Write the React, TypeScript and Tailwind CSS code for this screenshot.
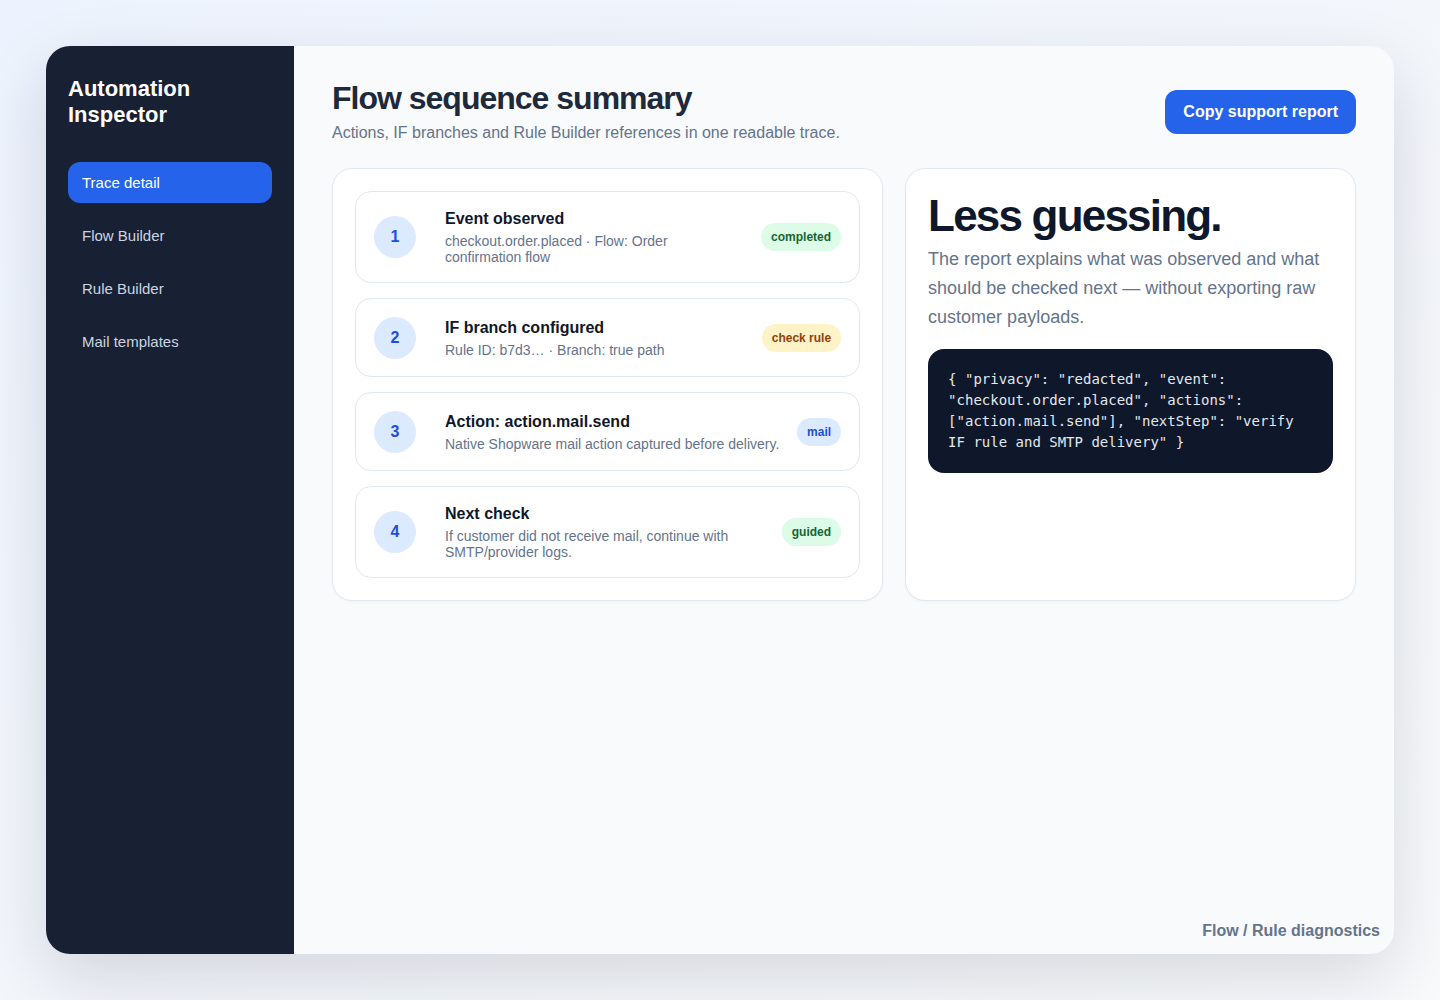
const steps = [
  {
    n: 1,
    title: 'Event observed',
    desc: 'checkout.order.placed · Flow: Order confirmation flow',
    badge: 'completed',
    tone: 'bg-[#dcfce7] text-[#166534]',
  },
  {
    n: 2,
    title: 'IF branch configured',
    desc: 'Rule ID: b7d3… · Branch: true path',
    badge: 'check rule',
    tone: 'bg-[#fef3c7] text-[#92400e]',
  },
  {
    n: 3,
    title: 'Action: action.mail.send',
    desc: 'Native Shopware mail action captured before delivery.',
    badge: 'mail',
    tone: 'bg-[#dbeafe] text-[#1d4ed8]',
  },
  {
    n: 4,
    title: 'Next check',
    desc: 'If customer did not receive mail, continue with SMTP/provider logs.',
    badge: 'guided',
    tone: 'bg-[#dcfce7] text-[#166534]',
  },
];

const nav = ['Trace detail', 'Flow Builder', 'Rule Builder', 'Mail templates'];

export default function App() {
  return (
    <div className="min-h-[1000px] w-full bg-gradient-to-br from-[#edf3fe] via-[#f3f6fb] to-[#f9fafb] p-[46px] font-['Liberation_Sans',Arial,sans-serif]">
      <div className="flex h-[908px] overflow-hidden rounded-[24px] bg-[#f8fafc] shadow-[0_24px_70px_rgba(15,23,42,0.14)]">
        {/* Sidebar */}
        <aside className="w-[248px] shrink-0 bg-[#182033] px-[22px] pt-[30px]">
          <h1 className="text-[22px] font-bold leading-[26px] text-white">
            Automation
            <br />
            Inspector
          </h1>
          <nav className="mt-[34px] flex flex-col gap-3">
            {nav.map((item, idx) => (
              <div
                key={item}
                className={
                  idx === 0
                    ? 'flex h-[41px] items-center rounded-xl bg-[#2563eb] px-[14px] pt-px text-[15px] text-white'
                    : 'flex h-[41px] items-center rounded-xl px-[14px] pt-px text-[15px] text-[#cbd5e1]'
                }
              >
                {item}
              </div>
            ))}
          </nav>
        </aside>

        {/* Main */}
        <main className="flex flex-1 flex-col px-[38px] pt-[33px]">
          <div className="flex items-center justify-between">
            <div>
              <h2 className="text-[32px] font-bold leading-[38px] tracking-[-1px] text-[#1e293b]">
                Flow sequence summary
              </h2>
              <p className="mt-1 text-base leading-6 text-[#64748b]">
                Actions, IF branches and Rule Builder references in one readable trace.
              </p>
            </div>
            <button className="h-[44px] rounded-xl bg-[#2563eb] px-[18px] text-base font-bold text-white">
              Copy support report
            </button>
          </div>

          <div className="mt-[23px] grid grid-cols-[11fr_9fr] gap-[22px]">
            {/* Steps */}
            <div className="flex flex-col gap-[15px] rounded-[20px] border border-[#e2e8f0] bg-white p-[22px] shadow-[0_1px_3px_rgba(15,23,42,0.04)]">
              {steps.map((s) => (
                <div
                  key={s.n}
                  className="flex min-h-[79px] items-center rounded-2xl border border-[#e2e8f0] bg-white px-[18px] py-[17px]"
                >
                  <div className="flex h-[42px] w-[42px] shrink-0 items-center justify-center rounded-full bg-[#dbeafe] text-base font-bold text-[#1d4ed8]">
                    {s.n}
                  </div>
                  <div className="ml-[29px] min-w-0 flex-1">
                    <div className="text-base font-bold leading-5 text-[#0f172a]">{s.title}</div>
                    <div className="mt-1 text-sm leading-4 text-[#64748b]">{s.desc}</div>
                  </div>
                  <span
                    className={`ml-[15px] shrink-0 rounded-full px-[10px] py-[7px] text-xs font-bold leading-[14px] ${s.tone}`}
                  >
                    {s.badge}
                  </span>
                </div>
              ))}
            </div>

            {/* Summary */}
            <div className="rounded-[20px] border border-[#e2e8f0] bg-white p-[22px] shadow-[0_1px_3px_rgba(15,23,42,0.04)]">
              <h3 className="text-[44px] font-bold leading-[50px] tracking-[-1.8px] text-[#0f172a]">
                Less guessing.
              </h3>
              <p className="mt-1 text-lg leading-[29px] text-[#64748b]">
                The report explains what was observed and what should be checked next — without
                exporting raw customer payloads.
              </p>
              <pre className="mt-[17px] whitespace-pre-wrap rounded-2xl bg-[#0f172a] px-5 py-[20px] font-['DejaVu_Sans_Mono',monospace] text-[14px] leading-[21px] text-[#e2e8f0]">
                {'{ "privacy": "redacted", "event": "checkout.order.placed", "actions": ["action.mail.send"], "nextStep": "verify IF rule and SMTP delivery" }'}
              </pre>
            </div>
          </div>

          <div className="-mr-[24px] mb-[11px] mt-auto self-end text-base font-bold text-[#64748b]">
            Flow / Rule diagnostics
          </div>
        </main>
      </div>
    </div>
  );
}
